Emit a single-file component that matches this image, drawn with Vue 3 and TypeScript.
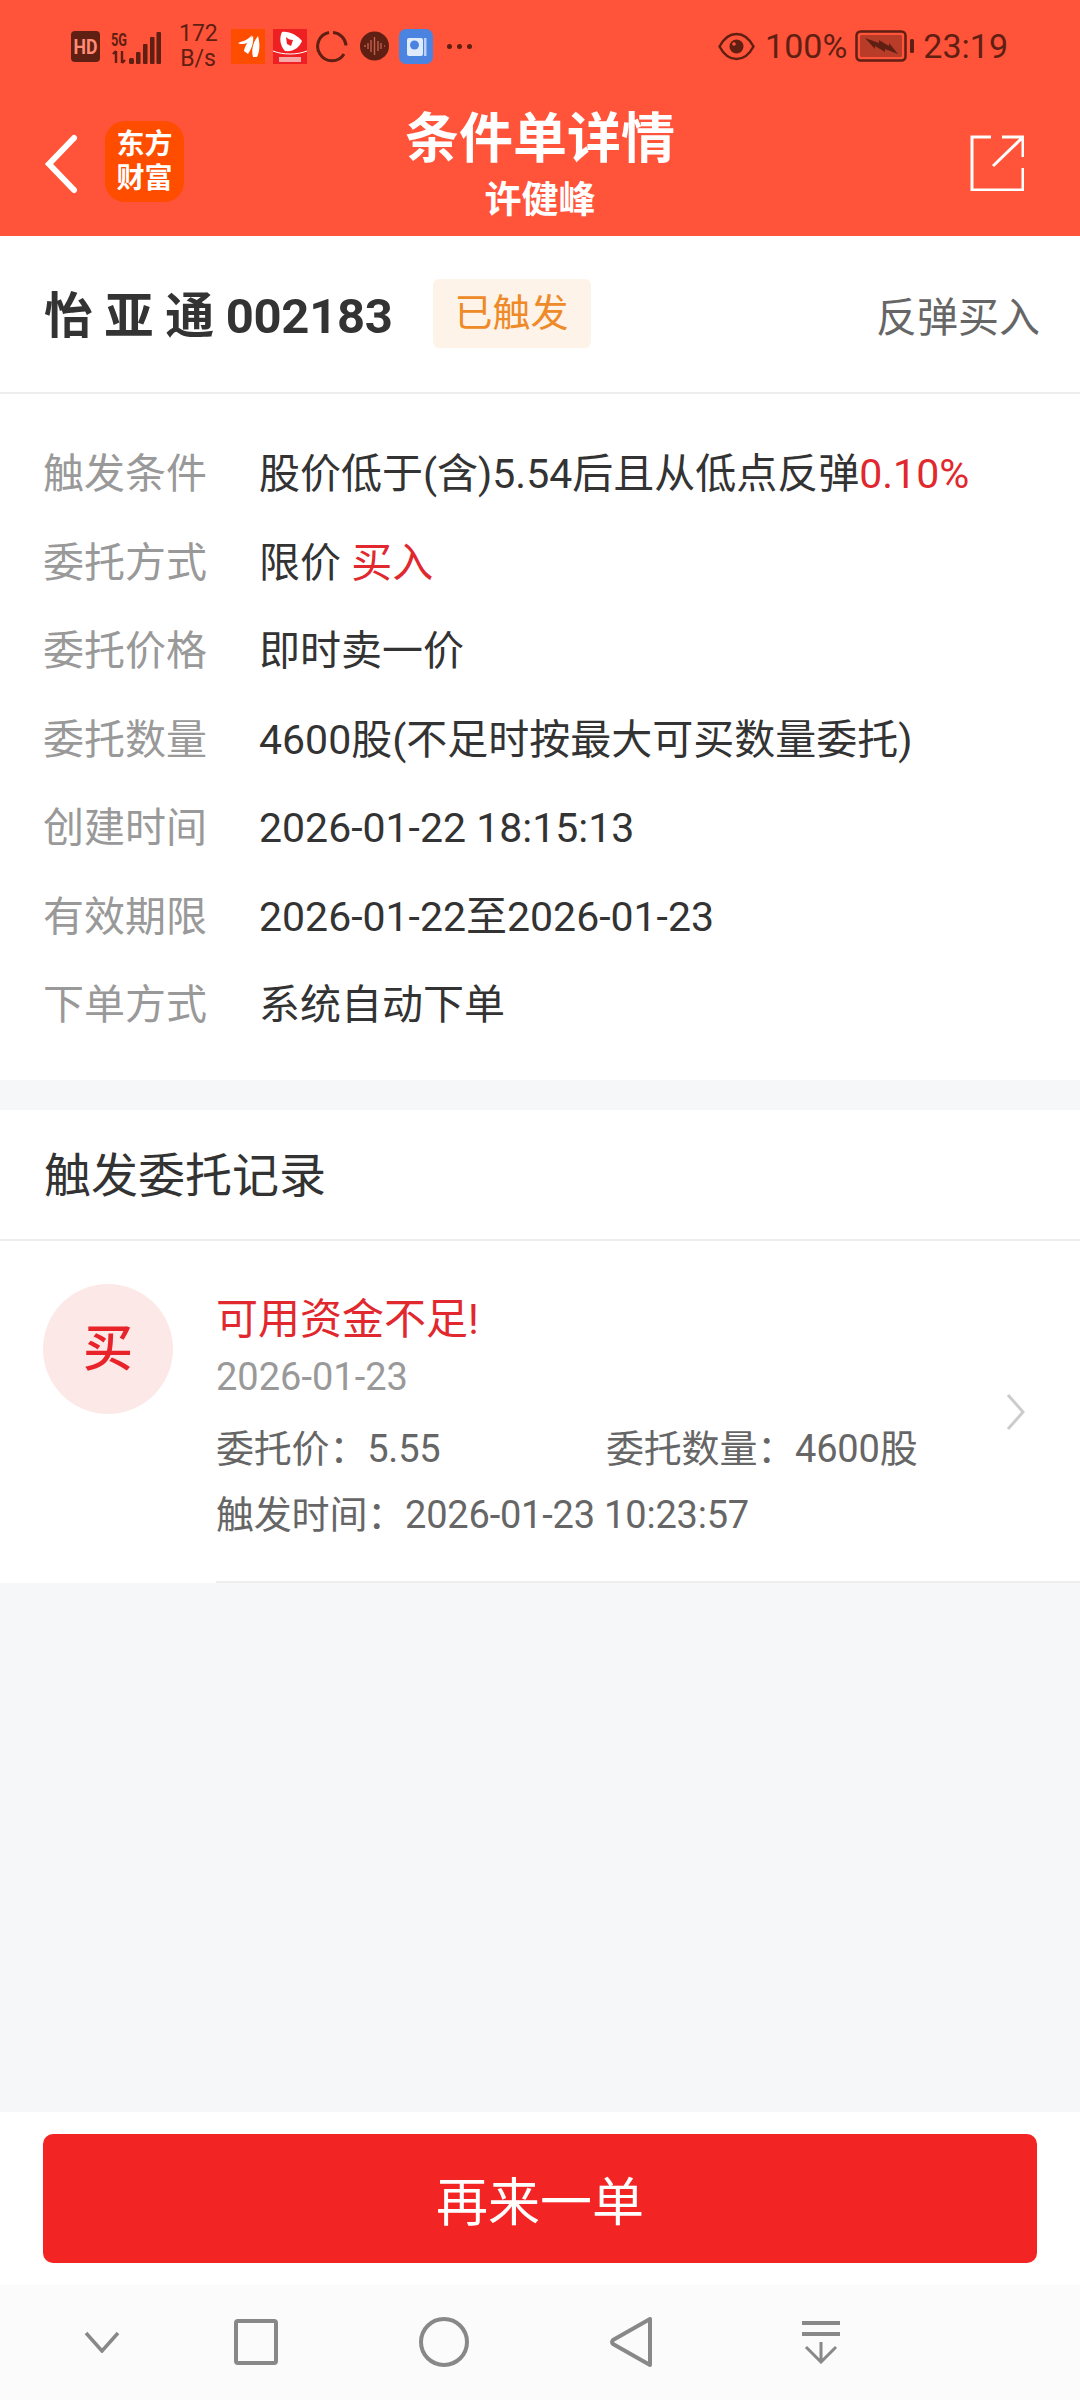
<script setup lang="ts">
interface DetailRow {
  label: string;
  value: string;
  accent?: string;
}

const rows: DetailRow[] = [
  { label: '触发条件', value: '股价低于(含)5.54后且从低点反弹', accent: '0.10%' },
  { label: '委托方式', value: '限价 ', accent: '买入' },
  { label: '委托价格', value: '即时卖一价' },
  { label: '委托数量', value: '4600股(不足时按最大可买数量委托)' },
  { label: '创建时间', value: '2026-01-22 18:15:13' },
  { label: '有效期限', value: '2026-01-22至2026-01-23' },
  { label: '下单方式', value: '系统自动下单' }
];
</script>

<template>
  <div class="page">
    <header class="header">
      <div class="status">
        <svg class="hd" width="29" height="31" viewBox="0 0 29 31">
          <rect width="29" height="31" rx="4" fill="#5f1f12" />
          <text x="2.500" y="22.500" class="hd-text" textLength="24" lengthAdjust="spacingAndGlyphs">HD</text>
        </svg>
        <svg class="signal" width="50" height="37" viewBox="0 -4 50 37">
          <text x="0" y="14" class="five-g" textLength="16" lengthAdjust="spacingAndGlyphs">5G</text>
          <path d="M5 19v12M2 22l3-3M11 19v12M11 31l3-3" stroke="#5f1f12" stroke-width="2.400" fill="none" />
          <rect x="18" y="26" width="5" height="6" rx="1.500" fill="#5f1f12" />
          <rect x="25" y="20" width="4.500" height="12" rx="1" fill="#5f1f12" />
          <rect x="32" y="12" width="4.500" height="20" rx="1" fill="#5f1f12" />
          <rect x="39" y="5" width="4.500" height="27" rx="1" fill="#5f1f12" />
          <rect x="45.500" y="0" width="4.500" height="32" rx="1" fill="#5f1f12" />
        </svg>
        <div class="speed">172<br />B/s</div>
        <svg class="app first" width="34" height="35" viewBox="0 0 34 35">
          <rect width="34" height="35" fill="#ff4d00" />
          <path d="M7 14c5-2 10-3 14-8-1 5-4 9-9 9-2 0-4 0-5-1zM13 22c1-6 5-11 9-15 1 6-1 12-5 18-1-1-3-2-4-3zM22 28c-2-7 0-15 5-21 2 7 2 15-1 21z" fill="#fff" />
        </svg>
        <svg class="app" width="34" height="35" viewBox="0 0 34 35">
          <rect width="34" height="35" fill="#ee2024" />
          <path d="M9 3c7-1 15 3 20 9-3 7-9 11-17 10-5-5-6-13-3-19z" fill="#fff" />
          <path d="M13 8c2 2 4 3 7 3l-2 6-4-2z" fill="#ee2024" />
          <path d="M0 22c10 4 24 4 34 0" stroke="#fff" stroke-width="1" fill="none" />
          <rect x="6" y="28" width="22" height="5" fill="#f7a9a9" />
        </svg>
        <svg class="app ring" width="32" height="33" viewBox="0 0 32 33">
          <path d="M17 2.500a14 14 0 0 1 13 13M28 24a14 14 0 0 1-24 0 14 14 0 0 1 9-21.500" stroke="#5f1f12" stroke-width="3" fill="none" />
        </svg>
        <svg class="app wave" width="29" height="30" viewBox="0 0 29 30">
          <circle cx="14.500" cy="15" r="14.500" fill="#5f1f12" />
          <path d="M4 15h2M8 12v6M11 9v12M14.500 6v18M18 10v10M21 12v6M24 15h1" stroke="#c0604e" stroke-width="1.400" />
        </svg>
        <svg class="app blue" width="34" height="35" viewBox="0 0 34 35">
          <rect width="34" height="35" rx="7" fill="#4a84e0" />
          <rect x="8" y="9" width="16" height="18" rx="2" fill="#dfeafb" />
          <circle cx="15.500" cy="16" r="4.500" fill="#4a84e0" />
          <rect x="25" y="9" width="2.500" height="18" fill="#b9d0f4" />
        </svg>
        <div class="dots"><i></i><i></i><i></i></div>

        <div class="status-right">
          <svg width="37" height="29" viewBox="0 0 37 29">
            <path d="M1.500 14.500C6 6 11 2 18.500 2S31 6 35.500 14.500C31 23 26 27 18.500 27S6 23 1.500 14.500z" fill="none" stroke="#5f1f12" stroke-width="2.500" />
            <circle cx="18.500" cy="14.500" r="7" fill="#5f1f12" />
            <circle cx="16" cy="12" r="1.800" fill="#ff533a" />
          </svg>
          <span class="pct">100%</span>
          <svg class="battery" width="59" height="32" viewBox="0 0 59 32">
            <rect x="1.500" y="1.500" width="49" height="29" rx="4" fill="none" stroke="#5f1f12" stroke-width="2.500" />
            <rect x="5" y="5" width="42" height="22" rx="1.500" fill="#b93c28" />
            <path d="M10 8l14 5v-3l10 6v-3l9 11-13-5v3l-10-6v3z" fill="#5f1f12" />
            <rect x="55" y="9" width="4" height="14" rx="1.500" fill="#5f1f12" />
          </svg>
          <span class="clock">23:19</span>
        </div>
      </div>

      <div class="titlebar">
        <svg class="back" width="34" height="60" viewBox="0 0 34 60">
          <path d="M30 4L5 30l25 26" fill="none" stroke="#fff" stroke-width="6" stroke-linecap="round" />
        </svg>
        <div class="logo"><span>东方</span><span>财富</span></div>
        <div class="titles">
          <div class="title">条件单详情</div>
          <div class="subtitle">许健峰</div>
        </div>
        <svg class="share" width="54" height="56" viewBox="0 0 54 56">
          <path d="M21 2H2v53h51V33M23 31L52 3M32 2h21v20" fill="none" stroke="#fff" stroke-width="3" />
        </svg>
      </div>
    </header>

    <section class="stock">
      <div class="stock-name">怡 亚 通 002183</div>
      <div class="badge">已触发</div>
      <div class="kind">反弹买入</div>
    </section>

    <section class="details">
      <div v-for="row in rows" :key="row.label" class="detail-row">
        <div class="detail-label">{{ row.label }}</div>
        <div class="detail-value">{{ row.value }}<span v-if="row.accent" class="red">{{ row.accent }}</span></div>
      </div>
    </section>

    <section class="records">
      <div class="records-title">触发委托记录</div>
      <div class="record">
        <div class="buy-mark">买</div>
        <div class="record-body">
          <div class="record-msg">可用资金不足!</div>
          <div class="record-date">2026-01-23</div>
          <div class="record-line">
            <span class="col">委托价：5.55</span>
            <span>委托数量：4600股</span>
          </div>
          <div class="record-line">触发时间：2026-01-23 10:23:57</div>
        </div>
        <svg class="chevron" width="20" height="38" viewBox="0 0 20 38">
          <path d="M2 2l15 17L2 36" fill="none" stroke="#cccccc" stroke-width="3" />
        </svg>
      </div>
    </section>

    <div class="spacer"></div>

    <footer class="footer">
      <button class="again">再来一单</button>
    </footer>

    <nav class="sysnav">
      <svg class="nav-down" width="36" height="22" viewBox="0 0 36 22">
        <path d="M2 2l16 18L34 2" fill="none" stroke="#888" stroke-width="3.500" />
      </svg>
      <svg class="nav-square" width="44" height="46" viewBox="0 0 44 46">
        <rect x="2" y="2" width="40" height="42" rx="2" fill="none" stroke="#888" stroke-width="4" />
      </svg>
      <svg class="nav-circle" width="50" height="50" viewBox="0 0 50 50">
        <circle cx="25" cy="25" r="23" fill="none" stroke="#888" stroke-width="4" />
      </svg>
      <svg class="nav-back" width="42" height="50" viewBox="0 0 42 50">
        <path d="M40 2v46L3 27a3 3 0 0 1 0-4z" fill="none" stroke="#888" stroke-width="4" stroke-linejoin="round" />
      </svg>
      <svg class="nav-drop" width="38" height="44" viewBox="0 0 38 44">
        <path d="M0 3h38M0 14h38" stroke="#888" stroke-width="4" />
        <path d="M19 22v20M4 27l15 15 15-15" fill="none" stroke="#888" stroke-width="3" />
      </svg>
    </nav>
  </div>
</template>

<style>
html,
body {
  margin: 0;
  background: #f6f7f9;
}
</style>

<style scoped>
.page {
  width: 1080px;
  height: 2400px;
  display: flex;
  flex-direction: column;
  background: #f6f7f9;
  font-family: Roboto, "Noto Sans CJK SC", sans-serif;
  color: #333;
}

.header {
  height: 236px;
  background: #ff533a;
  color: #fff;
  flex-shrink: 0;
}

.status {
  height: 92px;
  display: flex;
  align-items: center;
  padding-left: 71px;
  padding-right: 72px;
  color: #5f1f12;
}

.hd-text {
  font: 700 20px Roboto, sans-serif;
  fill: #ff8a75;
}

.five-g {
  font: 700 18px Roboto, sans-serif;
  fill: #5f1f12;
}

.signal {
  margin-left: 11px;
}

.speed {
  margin-left: 18px;
  font-size: 23px;
  line-height: 25px;
  width: 38px;
  text-align: center;
}

.app {
  margin-left: 8px;
  flex-shrink: 0;
}

.first {
  margin-left: 14px;
}

.ring {
  margin-left: 9px;
}

.wave {
  margin-left: 12px;
}

.blue {
  margin-left: 10px;
}

.dots {
  margin-left: 14px;
  display: flex;
  gap: 5px;
}

.dots i {
  width: 5px;
  height: 5px;
  border-radius: 50%;
  background: #5f1f12;
}

.status-right {
  margin-left: auto;
  display: flex;
  align-items: center;
  font-size: 34px;
}

.pct {
  margin-left: 10px;
}

.battery {
  margin-left: 8px;
}

.clock {
  margin-left: 9px;
}

.titlebar {
  height: 144px;
  display: flex;
  align-items: center;
  padding-left: 44px;
  padding-right: 56px;
}

.logo {
  width: 79px;
  height: 81px;
  margin-left: 27px;
  margin-top: -5px;
  border-radius: 20px;
  background: #ff4d00;
  display: flex;
  flex-direction: column;
  align-items: center;
  justify-content: center;
  font-size: 28px;
  font-weight: 700;
  line-height: 34px;
}

.titles {
  flex: 1;
  margin-left: -74px;
  align-self: flex-start;
  margin-top: 15px;
  text-align: center;
}

.title {
  font-size: 54px;
  font-weight: 700;
  line-height: 66px;
}

.subtitle {
  font-size: 37px;
  font-weight: 700;
  line-height: 44px;
  margin-top: 6px;
}

.share {
  margin-top: -3px;
}

.stock {
  height: 158px;
  background: #fff;
  border-bottom: 2px solid #eeeeee;
  box-sizing: border-box;
  display: flex;
  align-items: center;
  padding: 0 40px 0 44px;
  flex-shrink: 0;
}

.stock-name {
  font-size: 49px;
  font-weight: 700;
  letter-spacing: -0.300px;
  margin-top: -5px;
}

.badge {
  margin-left: 40px;
  width: 158px;
  height: 69px;
  border-radius: 6px;
  background: #fdf3e9;
  color: #ee8a28;
  font-size: 38px;
  line-height: 69px;
  text-align: center;
  margin-top: -1px;
}

.kind {
  margin-left: auto;
  font-size: 41px;
  color: #666;
}

.details {
  background: #fff;
  padding: 36px 0 30.500px;
  flex-shrink: 0;
}

.detail-row {
  height: 88.500px;
  display: flex;
  align-items: center;
  padding-left: 43px;
  font-size: 41px;
  line-height: 56px;
}

.detail-label {
  width: 216px;
  color: #999;
}

.detail-value {
  color: #333;
  white-space: pre;
}

.red {
  color: #e0282e;
}

.records {
  margin-top: 30px;
  background: #fff;
  flex-shrink: 0;
}

.records-title {
  height: 131px;
  line-height: 131px;
  padding-left: 44px;
  font-size: 47px;
  border-bottom: 2px solid #eeeeee;
  box-sizing: border-box;
}

.record {
  display: flex;
  padding: 43px 0 0 43px;
  height: 342px;
  box-sizing: border-box;
  position: relative;
}

.buy-mark {
  width: 130px;
  height: 130px;
  border-radius: 50%;
  background: #fde8e8;
  color: #e9232a;
  font-size: 50px;
  font-weight: 500;
  line-height: 130px;
  text-align: center;
  flex-shrink: 0;
}

.record-body {
  margin-left: 43px;
  flex: 1;
  border-bottom: 2px solid #eeeeee;
}

.record-msg {
  color: #e0282e;
  font-size: 42px;
  line-height: 55px;
  margin-top: 8px;
}

.record-date {
  color: #999;
  font-size: 38px;
  line-height: 60px;
}

.record-line {
  color: #666;
  font-size: 38px;
  line-height: 66px;
  letter-spacing: -0.200px;
}

.record-date + .record-line {
  margin-top: 9px;
}

.col {
  display: inline-block;
  width: 390px;
}

.chevron {
  position: absolute;
  right: 54px;
  top: 152px;
}

.spacer {
  flex: 1;
}

.footer {
  height: 173px;
  background: #fff;
  padding: 22px 43px 0;
  box-sizing: border-box;
  flex-shrink: 0;
}

.again {
  display: block;
  width: 100%;
  height: 129px;
  border: 0;
  border-radius: 10px;
  background: #f32424;
  color: #fff;
  font-family: inherit;
  font-size: 52px;
}

.sysnav {
  height: 115px;
  background: #fbfbfb;
  position: relative;
  flex-shrink: 0;
}

.sysnav svg {
  position: absolute;
}

.nav-down {
  left: 84px;
  top: 46px;
}

.nav-square {
  left: 234px;
  top: 34px;
}

.nav-circle {
  left: 419px;
  top: 32px;
}

.nav-back {
  left: 610px;
  top: 32px;
}

.nav-drop {
  left: 802px;
  top: 35px;
}
</style>
